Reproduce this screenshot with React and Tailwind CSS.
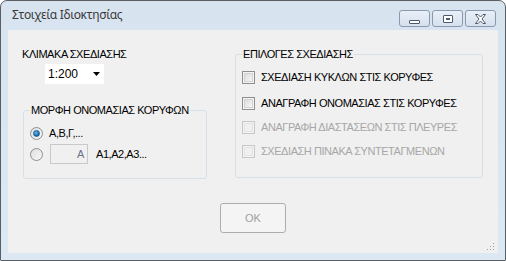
import React from "react";

const font = { fontFamily: '"Liberation Sans", Arial, sans-serif' };

function Checkbox({ label, disabled }) {
  return (
    <div className="flex items-center h-[13px] gap-[6px]">
      <div
        className={
          "w-[13px] h-[13px] border flex items-center justify-center " +
          (disabled ? "border-[#c7c7c7] bg-[#f4f4f4]" : "border-[#8e8f8f] bg-[#f4f4f4]")
        }
      >
        <div
          className={
            "w-[9px] h-[9px] border " +
            (disabled
              ? "border-[#e3e3e3] bg-[#f1f1f1]"
              : "border-[#d2d2d2] bg-gradient-to-br from-[#dcdcdc] to-[#f6f6f6]")
          }
        />
      </div>
      <span className={disabled ? "text-[#a7a7a7]" : "text-black"}>{label}</span>
    </div>
  );
}

function Radio({ checked }) {
  return (
    <div className="w-[13px] h-[13px] rounded-full border border-[#8e8f8f] bg-gradient-to-br from-[#dedede] to-[#f8f8f8] flex items-center justify-center shrink-0">
      {checked && (
        <div className="w-[7px] h-[7px] rounded-full bg-[radial-gradient(circle_at_40%_35%,#6ec0ee,#1d6fae_60%,#0d4f86)] border border-[#1a5f95]" />
      )}
    </div>
  );
}

function TitleButton({ children }) {
  return (
    <div className="w-[31px] h-[17px] rounded-[3px] border border-[#8a99ae] bg-gradient-to-b from-[#e9eff7] to-[#d6e0ed] flex items-center justify-center">
      {children}
    </div>
  );
}

export default function App() {
  return (
    <div className="w-[506px] h-[261px] bg-white" style={font}>
      <div className="w-full h-full border border-[#5a5e63] rounded-t-[7px] rounded-b-[1px] bg-gradient-to-b from-[#d8e3f0] to-[#dde8f5] flex flex-col overflow-hidden">
        <div className="h-[29px] flex items-start justify-between pl-[11px] pr-[9px]">
          <div
            className="text-[12px] leading-[14px] mt-[7px] text-[#3a3a3a] tracking-[-0.3px]"
            style={{ fontFamily: '"Noto Sans", "DejaVu Sans", sans-serif' }}
          >
            Στοιχεία Ιδιοκτησίας
          </div>
          <div className="flex gap-[2px] mt-[9px]">
            <TitleButton>
              <div className="w-[11px] h-[4px] mt-[6px] border border-[#4b5a6e] rounded-[1px] bg-white" />
            </TitleButton>
            <TitleButton>
              <div className="w-[10px] h-[8px] border border-[#4b5a6e] rounded-[1px] flex items-center justify-center bg-white">
                <div className="w-[4px] h-[2px] bg-[#4b5a6e]" />
              </div>
            </TitleButton>
            <TitleButton>
              <svg width="13" height="10" viewBox="0 0 13 10">
                <path
                  d="M1.5 0.5 H4 L6.5 3 L9 0.5 H11.5 L8 5 L11.5 9.5 H9 L6.5 7 L4 9.5 H1.5 L5 5 Z"
                  fill="#ffffff"
                  stroke="#4b5a6e"
                  strokeWidth="1"
                  strokeLinejoin="round"
                />
              </svg>
            </TitleButton>
          </div>
        </div>

        <div className="mx-[7px] h-[223px] bg-[#f0f0f0] relative text-[11px] leading-[13px] tracking-[-0.45px] pt-[18px]">
          <div className="flex items-start">
            <div className="ml-[14px] w-[213px] flex flex-col">
              <div className="text-black">ΚΛΙΜΑΚΑ ΣΧΕΔΙΑΣΗΣ</div>
              <div className="ml-[23px] mt-[3px] w-[59px] h-[20px] bg-white flex items-center justify-between pl-[3px] pr-[4px]">
                <span className="text-black text-[12px] tracking-normal">1:200</span>
                <svg width="7" height="4" viewBox="0 0 7 4">
                  <path d="M0 0 H7 L3.5 4 Z" fill="#000" />
                </svg>
              </div>
              <fieldset className="ml-[1px] mt-[20px] w-[184px] h-[75px] border border-[#d5dfe5] rounded-[3px] pl-[6px]">
                <legend className="ml-[0px] px-[1px] text-black">ΜΟΡΦΗ ΟΝΟΜΑΣΙΑΣ ΚΟΡΥΦΩΝ</legend>
                <div className="mt-[8px] h-[16px] flex items-center gap-[6px]">
                  <Radio checked />
                  <span className="text-black">Α,Β,Γ,...</span>
                </div>
                <div className="mt-[3px] h-[20px] flex items-center">
                  <Radio />
                  <div className="ml-[7px] w-[38px] h-[20px] border border-[#c9c9c9] bg-[#f0f0f0] flex items-center justify-end pr-[3px] text-[#6f6f86]">
                    A
                  </div>
                  <span className="ml-[8px] text-black">Α1,Α2,Α3...</span>
                </div>
              </fieldset>
            </div>

            <fieldset className="w-[248px] h-[130px] border border-[#d5dfe5] rounded-[3px] pl-[6px]">
              <legend className="ml-[0px] px-[1px] text-black">ΕΠΙΛΟΓΕΣ ΣΧΕΔΙΑΣΗΣ</legend>
              <div className="mt-[10px]">
                <Checkbox label="ΣΧΕΔΙΑΣΗ ΚΥΚΛΩΝ ΣΤΙΣ ΚΟΡΥΦΕΣ" />
              </div>
              <div className="mt-[13px]">
                <Checkbox label="ΑΝΑΓΡΑΦΗ ΟΝΟΜΑΣΙΑΣ ΣΤΙΣ ΚΟΡΥΦΕΣ" />
              </div>
              <div className="mt-[11px]">
                <Checkbox label="ΑΝΑΓΡΑΦΗ ΔΙΑΣΤΑΣΕΩΝ ΣΤΙΣ ΠΛΕΥΡΕΣ" disabled />
              </div>
              <div className="mt-[11px]">
                <Checkbox label="ΣΧΕΔΙΑΣΗ ΠΙΝΑΚΑ ΣΥΝΤΕΤΑΓΜΕΝΩΝ" disabled />
              </div>
            </fieldset>
          </div>

          <div className="flex justify-center mt-[24px]">
            <div className="w-[66px] h-[30px] border border-[#adadad] rounded-[3px] bg-[#f4f4f4] flex items-center justify-center text-[#a0a0a0] tracking-normal">
              OK
            </div>
          </div>

          <svg className="absolute right-[3px] bottom-[2px]" width="8" height="8" viewBox="0 0 8 8">
            <rect x="6" y="0" width="1" height="1" fill="#a0a0a0" />
            <rect x="3" y="3" width="1" height="1" fill="#a0a0a0" />
            <rect x="6" y="3" width="1" height="1" fill="#a0a0a0" />
            <rect x="0" y="6" width="1" height="1" fill="#a0a0a0" />
            <rect x="3" y="6" width="1" height="1" fill="#a0a0a0" />
            <rect x="6" y="6" width="1" height="1" fill="#a0a0a0" />
          </svg>
        </div>
      </div>
    </div>
  );
}
